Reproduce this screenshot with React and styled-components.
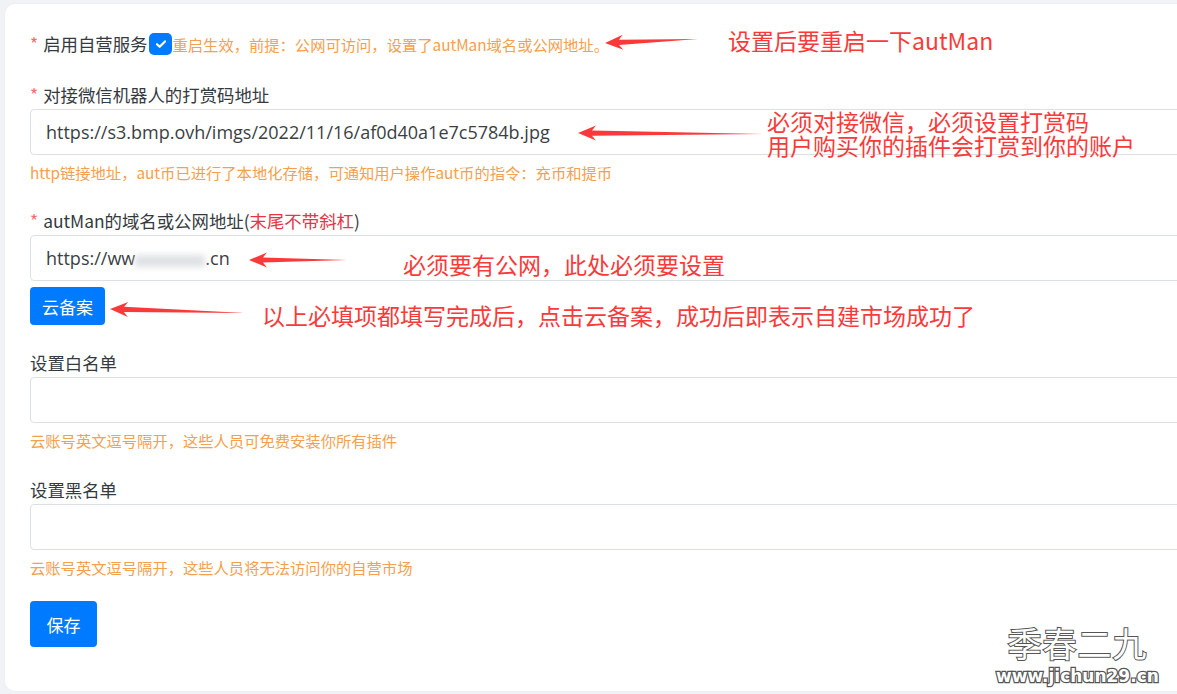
import React from "react";
import styled, { createGlobalStyle } from "styled-components";

const GlobalStyle = createGlobalStyle`
  html, body {
    margin: 0;
    background: #f0f2f5;
    overflow: hidden;
  }
  body {
    font-family: "Noto Sans CJK SC", "Liberation Sans", sans-serif;
  }
`;

const Page = styled.div`
  position: relative;
  width: 1177px;
  height: 694px;
  padding: 4px 0 0 5px;
  box-sizing: border-box;
  overflow: hidden;
`;

const Card = styled.div`
  width: 1260px;
  height: 687px;
  background: #fff;
  border-radius: 10px;
  padding: 28px 25px 0 25px;
  box-sizing: border-box;
  box-shadow: 0 0 2px rgba(0, 0, 0, 0.04);
`;

const SwitchRow = styled.div`
  display: flex;
  align-items: center;
  height: 24px;
  margin-bottom: 27px;
`;

const Field = styled.div`
  display: flex;
  flex-direction: column;
  align-items: flex-start;
  margin-bottom: ${(p) => p.$gap || 0}px;
`;

const Label = styled.label`
  font-size: 17.4px;
  line-height: 24px;
  color: #343a40;
  margin-bottom: ${(p) => (p.$inline ? 0 : 2)}px;
  white-space: nowrap;
`;

const Star = styled.span`
  color: #f56c6c;
  margin-right: 5px;
`;

const RedNote = styled.span`
  color: #e8334a;
`;

const Check = styled.span`
  display: inline-flex;
  align-items: center;
  justify-content: center;
  width: 23px;
  height: 22px;
  margin-left: 2px;
  border-radius: 5px;
  background: #007bff;
`;

const Hint = styled.div`
  font-size: 15.3px;
  line-height: 20px;
  color: #f5a04c;
  margin-top: ${(p) => (p.$inline ? 0 : 7)}px;
  white-space: nowrap;
`;

const Input = styled.div`
  width: 100%;
  height: 46px;
  border: 1px solid #dcdfe6;
  border-radius: 4px;
  padding: 0 15px;
  box-sizing: border-box;
  display: flex;
  align-items: center;
  font-family: "Open Sans", "Liberation Sans", sans-serif;
  font-size: 18px;
  color: #3a3f44;
  white-space: nowrap;
`;

const Blur = styled.span`
  display: inline-block;
  width: 70px;
  height: 12px;
  margin-top: 6px;
  background: #dfe1e4;
  filter: blur(3px);
`;

const Button = styled.button`
  border: none;
  background: #007bff;
  color: #fff;
  border-radius: 4px;
  font-family: "Noto Sans CJK SC", sans-serif;
  font-size: 17px;
  padding: 0;
  width: ${(p) => p.$w}px;
  height: ${(p) => p.$h}px;
  margin-top: ${(p) => p.$top || 0}px;
`;

const Overlay = styled.svg`
  position: absolute;
  left: 0;
  top: 0;
  pointer-events: none;
`;

const Note = styled.div`
  position: absolute;
  color: #fa3a3a;
  font-size: 23px;
  line-height: 23px;
  white-space: nowrap;
  font-family: "Noto Sans CJK SC", sans-serif;
`;

const Mark = styled.div`
  position: absolute;
  left: 996px;
  top: 621px;
  display: flex;
  flex-direction: column;
  align-items: center;
  color: #fff;
  paint-order: stroke fill;
`;

const MarkTitle = styled.div`
  font-size: 34px;
  line-height: 44px;
  letter-spacing: 1px;
  -webkit-text-stroke: 2px #555;
`;

const MarkUrl = styled.div`
  font-family: "DejaVu Sans", sans-serif;
  font-weight: bold;
  font-size: 17px;
  line-height: 22px;
  -webkit-text-stroke: 2.5px #555;
`;

const arrows = [
  { tip: [605, 43], tail: [698, 39] },
  { tip: [578, 133], tail: [763, 134] },
  { tip: [249, 260], tail: [347, 260] },
  { tip: [110, 309], tail: [245, 313] },
];

function arrowPoints({ tip, tail }) {
  const dx = tail[0] - tip[0];
  const dy = tail[1] - tip[1];
  const len = Math.hypot(dx, dy);
  const u = [dx / len, dy / len];
  const n = [-u[1], u[0]];
  const at = (a, b) => [tip[0] + u[0] * a + n[0] * b, tip[1] + u[1] * a + n[1] * b];
  const pts = [tip, at(18, 7.5), at(14, 2.6), tail, at(14, -2.6), at(18, -7.5)];
  return pts.map((p) => p.map((v) => v.toFixed(1)).join(",")).join(" ");
}

const Tick = () => (
  <svg width="14" height="14" viewBox="0 0 14 14">
    <path d="M3 7.2l2.7 2.6L11 4.4" fill="none" stroke="#fff" strokeWidth="2.2" strokeLinecap="round" strokeLinejoin="round" />
  </svg>
);

export default function App() {
  return (
    <Page>
      <GlobalStyle />
      <Card>
        <SwitchRow>
          <Label $inline>
            <Star>*</Star>启用自营服务
          </Label>
          <Check>
            <Tick />
          </Check>
          <Hint $inline>重启生效，前提：公网可访问，设置了autMan域名或公网地址。</Hint>
        </SwitchRow>

        <Field $gap={27}>
          <Label>
            <Star>*</Star>对接微信机器人的打赏码地址
          </Label>
          <Input>https://s3.bmp.ovh/imgs/2022/11/16/af0d40a1e7c5784b.jpg</Input>
          <Hint>http链接地址，aut币已进行了本地化存储，可通知用户操作aut币的指令：充币和提币</Hint>
        </Field>

        <Field $gap={26}>
          <Label>
            <Star>*</Star>autMan的域名或公网地址(<RedNote>末尾不带斜杠</RedNote>)
          </Label>
          <Input>
            https://ww<Blur />.cn
          </Input>
          <Button $w={75} $h={38} $top={6}>云备案</Button>
        </Field>

        <Field $gap={28}>
          <Label>设置白名单</Label>
          <Input />
          <Hint>云账号英文逗号隔开，这些人员可免费安装你所有插件</Hint>
        </Field>

        <Field $gap={24}>
          <Label>设置黑名单</Label>
          <Input />
          <Hint>云账号英文逗号隔开，这些人员将无法访问你的自营市场</Hint>
        </Field>

        <Button $w={67} $h={46}>保存</Button>
      </Card>

      <Overlay width="1177" height="694">
        {arrows.map((a, i) => (
          <polygon key={i} points={arrowPoints(a)} fill="#fa3a3a" />
        ))}
      </Overlay>

      <Note style={{ left: 728, top: 29 }}>设置后要重启一下autMan</Note>
      <Note style={{ left: 767, top: 110 }}>必须对接微信，必须设置打赏码</Note>
      <Note style={{ left: 767, top: 134 }}>用户购买你的插件会打赏到你的账户</Note>
      <Note style={{ left: 403, top: 253 }}>必须要有公网，此处必须要设置</Note>
      <Note style={{ left: 262, top: 304 }}>以上必填项都填写完成后，点击云备案，成功后即表示自建市场成功了</Note>

      <Mark>
        <MarkTitle>季春二九</MarkTitle>
        <MarkUrl>www.jichun29.cn</MarkUrl>
      </Mark>
    </Page>
  );
}
